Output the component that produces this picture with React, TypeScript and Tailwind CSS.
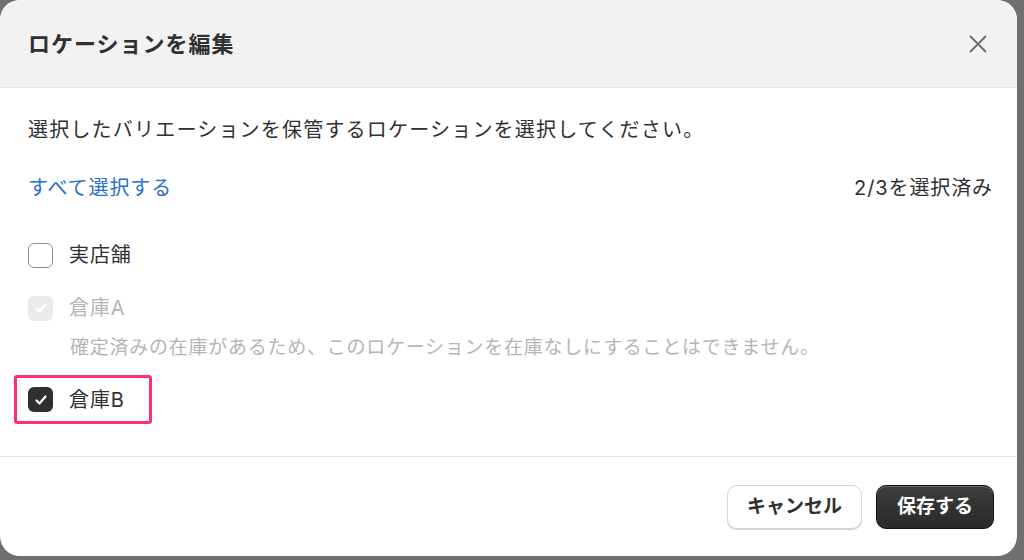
import React from 'react';

const CheckMark: React.FC<{ color: string }> = ({ color }) => (
  <svg width="14" height="14" viewBox="0 0 14 14" fill="none">
    <path d="M2.5 7.5L5.5 10.5L11.5 3.5" stroke={color} strokeWidth="2.2" strokeLinecap="round" strokeLinejoin="round" />
  </svg>
);

const Checkbox: React.FC<{ state: 'off' | 'on' | 'disabled' }> = ({ state }) => {
  if (state === 'off') {
    return <span className="w-[25px] h-[25px] shrink-0 rounded-[6px] border-[1.5px] border-[#8f8f8f] bg-white" />;
  }
  if (state === 'disabled') {
    return (
      <span className="w-[25px] h-[25px] shrink-0 rounded-[6px] bg-[#ebebeb] flex items-center justify-center">
        <CheckMark color="#ffffff" />
      </span>
    );
  }
  return (
    <span className="w-[25px] h-[25px] shrink-0 rounded-[6px] bg-[#303030] flex items-center justify-center">
      <CheckMark color="#ffffff" />
    </span>
  );
};

export default function App() {
  return (
    <div className="w-[1024px] h-[560px] bg-[#6f6f6f] overflow-hidden font-['Inter','Noto_Sans_CJK_JP',sans-serif]">
      <div className="w-[1017px] h-[556px] bg-white rounded-[20px] overflow-hidden flex flex-col">
        {/* header */}
        <div className="h-[88px] shrink-0 bg-[#f2f2f2] border-b border-[#e3e3e3] flex items-center justify-between pl-[28px] pr-[30px]">
          <h1 className="text-[22px] leading-[30px] tracking-[1px] font-bold text-[#303030]">ロケーションを編集</h1>
          <svg width="18" height="18" viewBox="0 0 18 18" fill="none">
            <path d="M1.5 1.5L16.5 16.5M16.5 1.5L1.5 16.5" stroke="#6b6b6b" strokeWidth="1.8" strokeLinecap="round" />
          </svg>
        </div>

        {/* body */}
        <div className="flex-1 pl-[28px] pr-[24px] pt-[28px] tracking-[0.9px]">
          <p className="text-[20px] leading-[28px] tracking-[1.2px] text-[#303030]">
            選択したバリエーションを保管するロケーションを選択してください。
          </p>
          <div className="mt-[30px] flex items-center justify-between text-[20px] leading-[28px]">
            <span className="text-[#2c6ecb]">すべて選択する</span>
            <span className="text-[#303030]">2/3を選択済み</span>
          </div>

          <div className="mt-[39px] flex items-center gap-[16px] h-[28px]">
            <Checkbox state="off" />
            <span className="text-[20px] leading-[28px] text-[#303030]">実店舗</span>
          </div>

          <div className="mt-[25px] flex items-center gap-[16px] h-[28px]">
            <Checkbox state="disabled" />
            <span className="text-[20px] leading-[28px] text-[#b5b5b5]">倉庫A</span>
          </div>
          <p className="mt-[12px] pl-[42px] text-[19px] leading-[28px] tracking-[0.75px] text-[#b5b5b5]">
            確定済みの在庫があるため、このロケーションを在庫なしにすることはできません。
          </p>

          <div className="mt-[13px] -ml-[14px] w-[138px] h-[49px] border-[3px] border-[#ff2d7a] rounded-[3px] flex items-center gap-[16px] pl-[11px]">
            <Checkbox state="on" />
            <span className="text-[20px] leading-[28px] text-[#303030]">倉庫B</span>
          </div>
        </div>

        {/* footer */}
        <div className="h-[100px] shrink-0 border-t border-[#e3e3e3] flex items-start justify-end gap-[14px] pt-[28px] pr-[23px]">
          <button className="h-[44px] px-[19px] rounded-[10px] bg-white border border-[#d6d6d6] shadow-[0_1px_0_#cfcfcf] text-[19px] font-bold text-[#303030]">
            キャンセル
          </button>
          <button className="h-[44px] px-[20px] rounded-[10px] bg-gradient-to-b from-[#3d3d3d] to-[#2a2a2a] border border-[#111] shadow-[inset_0_1px_0_rgba(255,255,255,0.25)] text-[19px] font-bold text-white">
            保存する
          </button>
        </div>
      </div>
    </div>
  );
}
